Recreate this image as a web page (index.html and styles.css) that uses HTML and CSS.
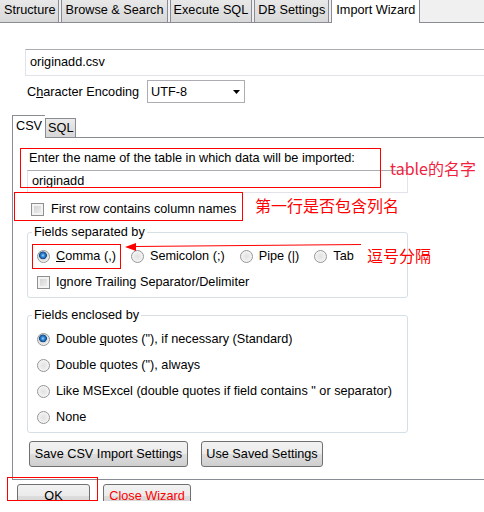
FILE: index.html
```html
<!DOCTYPE html>
<html>
<head>
<meta charset="utf-8">
<link rel="stylesheet" href="styles.css">
</head>
<body>
<div class="screen">
  <div class="tabbar">
    <div class="tab">Structure</div>
    <div class="tab">Browse &amp; Search</div>
    <div class="tab">Execute SQL</div>
    <div class="tab">DB Settings</div>
    <div class="tab active">Import Wizard</div>
  </div>
  <div class="content">
    <div class="file-field">originadd.csv</div>
    <div class="enc-row">
      <span class="enc-label">C<u>h</u>aracter Encoding</span>
      <div class="combo"><span>UTF-8</span><svg class="caret" width="7" height="4" viewBox="0 0 7 4"><path d="M0 0H7L3.5 4Z" fill="#000"/></svg></div>
    </div>
    <div class="subtabs">
      <div class="subtab active">CSV</div>
      <div class="subtab">SQL</div>
    </div>
    <div class="panel">
      <div class="label">Enter the name of the table in which data will be imported:</div>
      <div class="text-field">originadd</div>
      <div class="check-row first-row"><span class="checkbox"></span><span>First row contains column names</span></div>
      <fieldset class="group sep">
        <legend>Fields separated by</legend>
        <div class="radio-row">
          <span class="opt"><span class="radio checked"></span><span><u>C</u>omma (,)</span></span>
          <span class="opt"><span class="radio"></span><span>Semicolon (;)</span></span>
          <span class="opt"><span class="radio"></span><span>Pipe (|)</span></span>
          <span class="opt"><span class="radio"></span><span>Tab</span></span>
        </div>
        <div class="check-row ignore-row"><span class="checkbox"></span><span>Ignore Trailing Separator/Delimiter</span></div>
      </fieldset>
      <fieldset class="group encl">
        <legend>Fields enclosed by</legend>
        <div class="opts">
          <span class="opt"><span class="radio checked"></span><span>Double <u>q</u>uotes ("), if necessary (Standard)</span></span>
          <span class="opt"><span class="radio"></span><span>Double quotes ("), always</span></span>
          <span class="opt"><span class="radio"></span><span>Like MSExcel (double quotes if field contains " or separator)</span></span>
          <span class="opt"><span class="radio"></span><span>None</span></span>
        </div>
      </fieldset>
      <div class="btn-row">
        <button class="btn save">Save CSV Import Settings</button>
        <button class="btn use">Use Saved Settings</button>
      </div>
    </div>
    <div class="bottom-row">
      <button class="btn ok">OK</button>
      <button class="btn close">Close Wizard</button>
    </div>
  </div>

  <div class="mark mark-name"></div>
  <div class="note note-name">table的名字</div>
  <div class="mark mark-first"></div>
  <div class="note note-first">第一行是否包含列名</div>
  <div class="mark mark-comma"></div>
  <svg class="arrow" width="245" height="16" viewBox="0 0 245 16">
    <line x1="15" y1="8.5" x2="241" y2="6.5" stroke="#f00" stroke-width="1"/>
    <path d="M5 9L16 5L16 13Z" fill="#f00"/>
  </svg>
  <div class="note note-comma">逗号分隔</div>
  <div class="mark mark-ok"></div>
</div>
</body>
</html>
```

FILE: styles.css
```css
body {
  margin: 0;
  background: #fff;
  font-family: "Liberation Sans", Arial, sans-serif;
  font-size: 12.7px;
  color: #000;
}

.screen {
  position: relative;
  width: 484px;
  height: 501px;
  overflow: hidden;
  background: #fff;
}

/* top tab bar */
.tabbar {
  display: flex;
  height: 22px;
  background: #f0f0f0;
  border-bottom: 1px solid #898c95;
}

.tab {
  box-sizing: border-box;
  height: 22px;
  padding: 0 3px;
  margin-right: 2px;
  border: 1px solid #898c95;
  border-top: none;
  border-bottom: none;
  background: linear-gradient(#e8e8e8, #d8d8d8);
  line-height: 21px;
  white-space: nowrap;
}

.tab:first-child {
  border-left: none;
  padding-left: 4px;
}

.tab.active {
  height: 23px;
  padding: 0 4px;
  background: #fff;
}

/* file + encoding */
.file-field {
  box-sizing: border-box;
  margin: 26px 0 0 25px;
  height: 27px;
  padding-left: 4px;
  border: 1px solid #e2e3ea;
  border-top-color: #abadb3;
  border-right: none;
  line-height: 25px;
}

.enc-row {
  display: flex;
  align-items: center;
  height: 23px;
  margin: 4px 0 0 27px;
}

.enc-label {
  width: 120px;
}

.combo {
  box-sizing: border-box;
  width: 98px;
  height: 23px;
  display: flex;
  align-items: center;
  justify-content: space-between;
  padding: 0 4px 0 3px;
  border: 1px solid #abadb3;
  background: #fff;
}

.caret {
  display: block;
}

/* sub tabs */
.subtabs {
  display: flex;
  align-items: flex-end;
  height: 22px;
  margin: 12px 0 0 12px;
}

.subtab {
  box-sizing: border-box;
  height: 19px;
  padding: 0 2px;
  border: 1px solid #898c95;
  border-bottom: none;
  background: linear-gradient(#ececec, #d6d6d6);
  line-height: 19px;
}

.subtab.active {
  position: relative;
  z-index: 1;
  height: 23px;
  margin-bottom: -1px;
  border-right: none;
  background: #fff;
  line-height: 20px;
  padding: 0 3px 3px 3px;
}

.panel {
  margin-left: 12px;
  padding: 12px 0 12px 0;
  border: 1px solid #898c95;
  border-right: none;
}

.label {
  margin-left: 16px;
  line-height: 16px;
}

.text-field {
  box-sizing: border-box;
  width: 381px;
  height: 23px;
  margin: 4px 0 0 14px;
  padding-left: 4px;
  border: 1px solid #e2e3ea;
  border-top-color: #abadb3;
  line-height: 21px;
}

.check-row {
  display: flex;
  align-items: center;
  gap: 6px;
  height: 20px;
}

.first-row {
  margin: 6px 0 0 18px;
  gap: 7px;
}

.checkbox {
  box-sizing: border-box;
  width: 13px;
  height: 13px;
  border: 1px solid #8e8f8f;
  background: linear-gradient(135deg, #cbcbcb, #f4f4f4);
  box-shadow: inset 0 0 0 2px #f3f3f3;
}

/* group boxes */
.group {
  box-sizing: border-box;
  width: 381px;
  margin: 0 0 0 14px;
  padding: 6px 0 5px 0;
  border: 1px solid #d5dfe5;
  border-radius: 3px;
  min-inline-size: 0;
}

.group legend {
  margin-left: 4px;
  padding: 0 2px;
  line-height: 16px;
}

.sep {
  margin-top: 5px;
}

.encl {
  margin-top: 9px;
}

.radio-row {
  display: flex;
  align-items: center;
  gap: 15px;
  height: 20px;
  margin-left: 9px;
}

.ignore-row {
  margin: 6px 0 0 9px;
}

.opts {
  display: flex;
  flex-direction: column;
  gap: 6px;
  margin-left: 9px;
}

.opt {
  display: flex;
  align-items: center;
  gap: 6px;
  height: 20px;
  white-space: nowrap;
}

.radio {
  box-sizing: border-box;
  flex: none;
  width: 13px;
  height: 13px;
  border-radius: 50%;
  border: 1px solid #959595;
  background: radial-gradient(circle at 50% 50%, #e2e2e2 0, #ececec 45%, #f8f8f8 75%, #d0d0d0 100%);
}

.radio.checked {
  background: radial-gradient(circle at 45% 40%, #9fdcff 0, #3a8fdc 1.5px, #1b5ea8 3px, #14467c 3.6px, #dcdcdc 4.2px, #f4f4f4 75%, #d0d0d0 100%);
}

/* buttons */
.btn {
  box-sizing: border-box;
  height: 26px;
  padding: 0;
  border: 1px solid #707070;
  border-radius: 3px;
  background: linear-gradient(#f2f2f2 0, #ebebeb 50%, #dddddd 51%, #cfcfcf 100%);
  font-family: inherit;
  font-size: 12.7px;
  color: #000;
  white-space: nowrap;
}

.btn-row {
  display: flex;
  gap: 13px;
  margin: 8px 0 0 16px;
}

.btn.save {
  width: 159px;
}

.btn.use {
  width: 122px;
}

.bottom-row {
  display: flex;
  gap: 13px;
  margin: 4px 0 0 17px;
}

.btn.ok {
  width: 73px;
  height: 24px;
}

.btn.close {
  width: 88px;
  height: 24px;
  color: #f00;
}

/* red annotations */
.mark {
  position: absolute;
  box-sizing: border-box;
  border: 1px solid #f00;
}

.mark-name {
  left: 20px;
  top: 148px;
  width: 361px;
  height: 40px;
}

.mark-first {
  left: 14px;
  top: 192px;
  width: 229px;
  height: 29px;
}

.mark-comma {
  left: 32px;
  top: 244px;
  width: 89px;
  height: 25px;
}

.mark-ok {
  left: 7px;
  top: 477px;
  width: 91px;
  height: 24px;
}

.arrow {
  position: absolute;
  left: 120px;
  top: 238px;
}

.note {
  position: absolute;
  font-family: "Noto Sans CJK SC", "Noto Sans", sans-serif;
  font-size: 16px;
  line-height: 18px;
  color: #f00;
  white-space: nowrap;
}

.note-name {
  left: 390px;
  top: 159px;
  color: #f2223f;
}

.note-first {
  left: 255px;
  top: 196px;
}

.note-comma {
  left: 367px;
  top: 246px;
}
```
